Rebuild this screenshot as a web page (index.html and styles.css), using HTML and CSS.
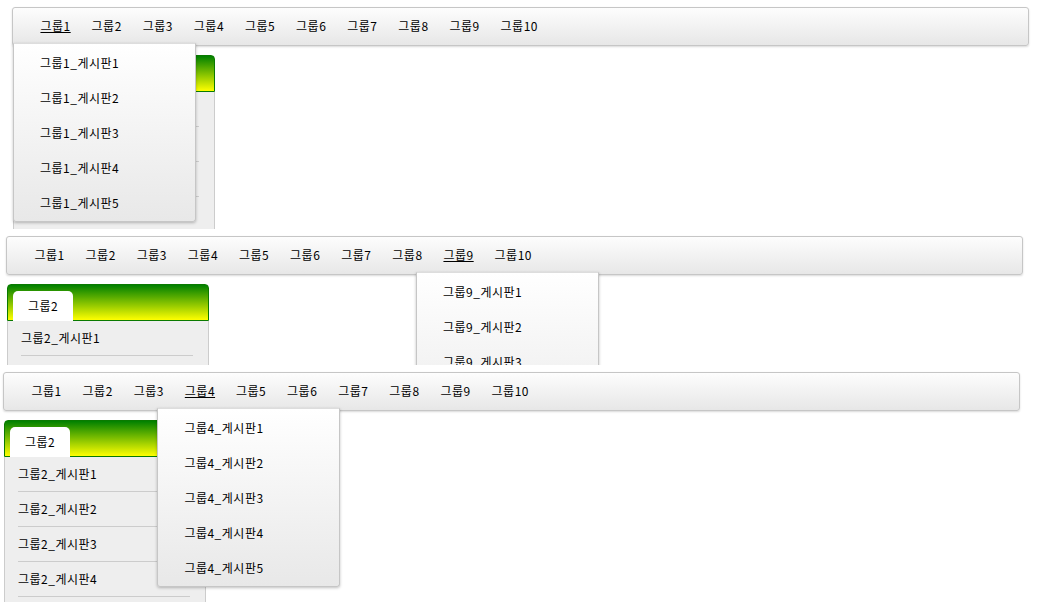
FILE: index.html
```html
<!DOCTYPE html>
<html lang="ko">
  <head>
    <meta charset="UTF-8" />
    <meta name="viewport" content="width=device-width, initial-scale=1.0" />
    <title>그룹 메뉴</title>
    <link rel="stylesheet" href="styles.css">
  </head>
  <body>
    <!-- hover on 그룹1 -->
    <div class="shot shot-1">
      <ul class="gnb">
        <li class="on">
          <a href="#">그룹1</a>
          <ul class="sub">
            <li><a href="#">그룹1_게시판1</a></li>
            <li><a href="#">그룹1_게시판2</a></li>
            <li><a href="#">그룹1_게시판3</a></li>
            <li><a href="#">그룹1_게시판4</a></li>
            <li><a href="#">그룹1_게시판5</a></li>
          </ul>
        </li>
        <li><a href="#">그룹2</a></li>
        <li><a href="#">그룹3</a></li>
        <li><a href="#">그룹4</a></li>
        <li><a href="#">그룹5</a></li>
        <li><a href="#">그룹6</a></li>
        <li><a href="#">그룹7</a></li>
        <li><a href="#">그룹8</a></li>
        <li><a href="#">그룹9</a></li>
        <li><a href="#">그룹10</a></li>
      </ul>
      <div class="lnb">
        <div class="lnb-head"><span class="tab">그룹1</span></div>
        <ul class="lnb-list">
          <li><a href="#">그룹1_게시판1</a></li>
          <li><a href="#">그룹1_게시판2</a></li>
          <li><a href="#">그룹1_게시판3</a></li>
          <li><a href="#">그룹1_게시판4</a></li>
          <li><a href="#">그룹1_게시판5</a></li>
        </ul>
      </div>
    </div>

    <!-- hover on 그룹9 -->
    <div class="shot shot-2">
      <ul class="gnb">
        <li><a href="#">그룹1</a></li>
        <li><a href="#">그룹2</a></li>
        <li><a href="#">그룹3</a></li>
        <li><a href="#">그룹4</a></li>
        <li><a href="#">그룹5</a></li>
        <li><a href="#">그룹6</a></li>
        <li><a href="#">그룹7</a></li>
        <li><a href="#">그룹8</a></li>
        <li class="on">
          <a href="#">그룹9</a>
          <ul class="sub">
            <li><a href="#">그룹9_게시판1</a></li>
            <li><a href="#">그룹9_게시판2</a></li>
            <li><a href="#">그룹9_게시판3</a></li>
            <li><a href="#">그룹9_게시판4</a></li>
            <li><a href="#">그룹9_게시판5</a></li>
          </ul>
        </li>
        <li><a href="#">그룹10</a></li>
      </ul>
      <div class="lnb">
        <div class="lnb-head"><span class="tab">그룹2</span></div>
        <ul class="lnb-list">
          <li><a href="#">그룹2_게시판1</a></li>
          <li><a href="#">그룹2_게시판2</a></li>
          <li><a href="#">그룹2_게시판3</a></li>
          <li><a href="#">그룹2_게시판4</a></li>
          <li><a href="#">그룹2_게시판5</a></li>
        </ul>
      </div>
    </div>

    <!-- hover on 그룹4 -->
    <div class="shot shot-3">
      <ul class="gnb">
        <li><a href="#">그룹1</a></li>
        <li><a href="#">그룹2</a></li>
        <li><a href="#">그룹3</a></li>
        <li class="on">
          <a href="#">그룹4</a>
          <ul class="sub">
            <li><a href="#">그룹4_게시판1</a></li>
            <li><a href="#">그룹4_게시판2</a></li>
            <li><a href="#">그룹4_게시판3</a></li>
            <li><a href="#">그룹4_게시판4</a></li>
            <li><a href="#">그룹4_게시판5</a></li>
          </ul>
        </li>
        <li><a href="#">그룹5</a></li>
        <li><a href="#">그룹6</a></li>
        <li><a href="#">그룹7</a></li>
        <li><a href="#">그룹8</a></li>
        <li><a href="#">그룹9</a></li>
        <li><a href="#">그룹10</a></li>
      </ul>
      <div class="lnb">
        <div class="lnb-head"><span class="tab">그룹2</span></div>
        <ul class="lnb-list">
          <li><a href="#">그룹2_게시판1</a></li>
          <li><a href="#">그룹2_게시판2</a></li>
          <li><a href="#">그룹2_게시판3</a></li>
          <li><a href="#">그룹2_게시판4</a></li>
          <li><a href="#">그룹2_게시판5</a></li>
        </ul>
      </div>
    </div>
  </body>
</html>
```

FILE: styles.css
```css
* {
  margin: 0;
  padding: 0;
  box-sizing: border-box;
}
body {
  background: #fff;
  font-family: "Noto Sans CJK KR", "Liberation Sans", sans-serif;
  font-size: 12px;
  letter-spacing: 0.5px;
  color: #000;
}
ul {
  list-style: none;
}
a {
  color: #000;
  text-decoration: none;
}

.shot {
  overflow: hidden;
  padding-top: 7px;
}
.shot-1 {
  height: 229px;
  padding-left: 12px;
}
.shot-2 {
  height: 136px;
  padding-left: 6px;
}
.shot-3 {
  height: 237px;
  padding-left: 3px;
}

/* top menu */
.gnb {
  display: flex;
  width: 1017px;
  height: 39px;
  padding-left: 17px;
  border: 1px solid #c6c6c6;
  border-radius: 3px;
  background: linear-gradient(#fdfdfd, #e7e7e7);
  box-shadow: 0 1px 2px rgba(0, 0, 0, 0.15);
}
.gnb > li {
  position: relative;
}
.gnb > li > a {
  display: block;
  padding: 0 10.45px;
  line-height: 36px;
}
.gnb > li.on > a {
  text-decoration: underline;
}

.gnb .sub {
  position: absolute;
  z-index: 10;
  top: 35px;
  left: -17px;
  width: 183px;
  padding: 1px 0;
  border: 1px solid #c6c6c6;
  border-top-color: #ddd;
  border-radius: 0 0 3px 3px;
  background: linear-gradient(#fff, #e8e8e8);
  box-shadow: 0 1px 3px rgba(0, 0, 0, 0.25);
}
.gnb .sub a {
  display: block;
  padding-left: 26px;
  line-height: 35px;
  white-space: nowrap;
}

/* side box */
.lnb {
  width: 202px;
  margin: 9px 0 0 1px;
}
.lnb-head {
  height: 37px;
  padding: 6px 0 0 5px;
  border: 1px solid #0a7a00;
  border-radius: 4px 4px 0 0;
  background: linear-gradient(#008000, #ffff00);
}
.lnb-head .tab {
  display: block;
  width: 60px;
  height: 30px;
  line-height: 30px;
  text-align: center;
  border-radius: 5px 5px 0 0;
  background: #fff;
}
.lnb-list {
  padding: 0 15px 0 13px;
  border: 1px solid #ccc;
  border-top: none;
  background: #eee;
}
.lnb-list li {
  border-bottom: 1px solid #ccc;
}
.lnb-list a {
  display: block;
  line-height: 34px;
  white-space: nowrap;
}
```
